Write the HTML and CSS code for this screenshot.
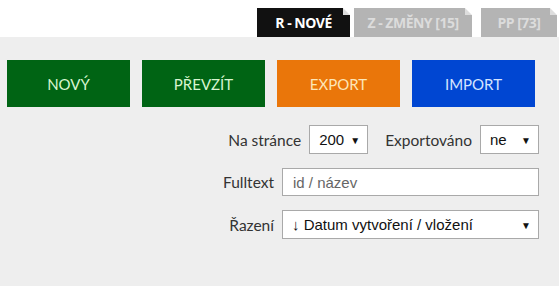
FILE: index.html
```html
<!DOCTYPE html>
<html lang="cs">
<head>
  <meta charset="UTF-8">
  <title>Seznam</title>
  <link rel="stylesheet" href="styles.css">
</head>
<body>
  <div class="tabs">
    <a class="tab active" href="#">R - NOVÉ</a>
    <a class="tab" href="#">Z - ZMĚNY [15]</a>
    <a class="tab tab-pp" href="#">PP [73]</a>
  </div>

  <div class="main">
    <div class="actions">
      <button class="btn btn-green">NOVÝ</button>
      <button class="btn btn-green">PŘEVZÍT</button>
      <button class="btn btn-orange">EXPORT</button>
      <button class="btn btn-blue">IMPORT</button>
    </div>

    <form class="filters">
      <div class="row">
        <label>Na stránce</label>
        <span class="select small">
          <select><option>200</option></select>
        </span>
        <label class="gap">Exportováno</label>
        <span class="select small">
          <select><option>ne</option></select>
        </span>
      </div>
      <div class="row">
        <label>Fulltext</label>
        <input class="wide" type="text" placeholder="id / název">
      </div>
      <div class="row">
        <label>Řazení</label>
        <span class="select wide">
          <select><option>↓ Datum vytvoření / vložení</option></select>
        </span>
      </div>
    </form>
  </div>
</body>
</html>
```

FILE: styles.css
```css
* {
  box-sizing: border-box;
}

body {
  margin: 0;
  background: #eeeeee;
  font-family: 'Lato', sans-serif;
  height: 286px;
}

/* tabs */
.tabs {
  background: #ffffff;
  height: 37px;
  display: flex;
  justify-content: flex-end;
  align-items: flex-end;
  gap: 4px;
  padding-right: 2px;
}

.tab {
  position: relative;
  display: block;
  height: 29px;
  line-height: 29px;
  text-align: center;
  text-decoration: none;
  font-family: 'Open Sans', sans-serif;
  font-weight: bold;
  font-size: 14px;
  letter-spacing: -0.5px;
  color: #dcdcdc;
  background: #b4b4b4;
  width: 118px;
}

.tab::after {
  content: "";
  position: absolute;
  top: 0;
  right: 0;
  border-style: solid;
  border-width: 0 7px 7px 0;
  border-color: #ffffff #ffffff #dddddd #dddddd;
}

.tab.active {
  background: #111111;
  color: #ffffff;
  width: 93px;
}

.tab-pp {
  width: 76px;
  margin-left: 5px;
}

/* buttons */
.main {
  padding: 23px 7px 0;
}

.actions {
  display: grid;
  grid-template-columns: repeat(4, 123px);
  gap: 12px;
}

.btn {
  height: 47px;
  border: none;
  font-family: 'Lato', sans-serif;
  font-size: 15px;
  cursor: pointer;
}

.btn-green {
  background: #006414;
  color: #d8f5d0;
}

.btn-orange {
  background: #ea760a;
  color: #fde6b8;
}

.btn-blue {
  background: #0046d2;
  color: #d6e4ff;
}

/* filters */
.filters {
  display: flex;
  flex-direction: column;
  align-items: flex-end;
  gap: 14px;
  margin-top: 18px;
  padding-right: 13px;
}

.row {
  display: flex;
  align-items: center;
}

.row label {
  font-size: 15.5px;
  color: #333333;
  margin-right: 8px;
}

.row label.gap {
  margin-left: 17px;
}

.select {
  position: relative;
  display: block;
}

.select::after {
  content: "▼";
  position: absolute;
  right: 8px;
  top: 50%;
  transform: translateY(-50%);
  font-size: 10px;
  color: #111111;
  pointer-events: none;
}

.select select,
input.wide {
  display: block;
  width: 100%;
  height: 29px;
  border: 1px solid #a9a9a9;
  background: #ffffff;
  font-family: 'Liberation Sans', Arial, sans-serif;
  font-size: 15px;
  color: #111111;
  padding: 0 0 0 9px;
  border-radius: 0;
  appearance: none;
  outline: none;
}

.select.small {
  width: 59px;
}

.select.wide,
input.wide {
  width: 257px;
}

input.wide {
  padding-left: 10px;
  height: 28px;
}

input.wide::placeholder {
  color: #666666;
}
```
